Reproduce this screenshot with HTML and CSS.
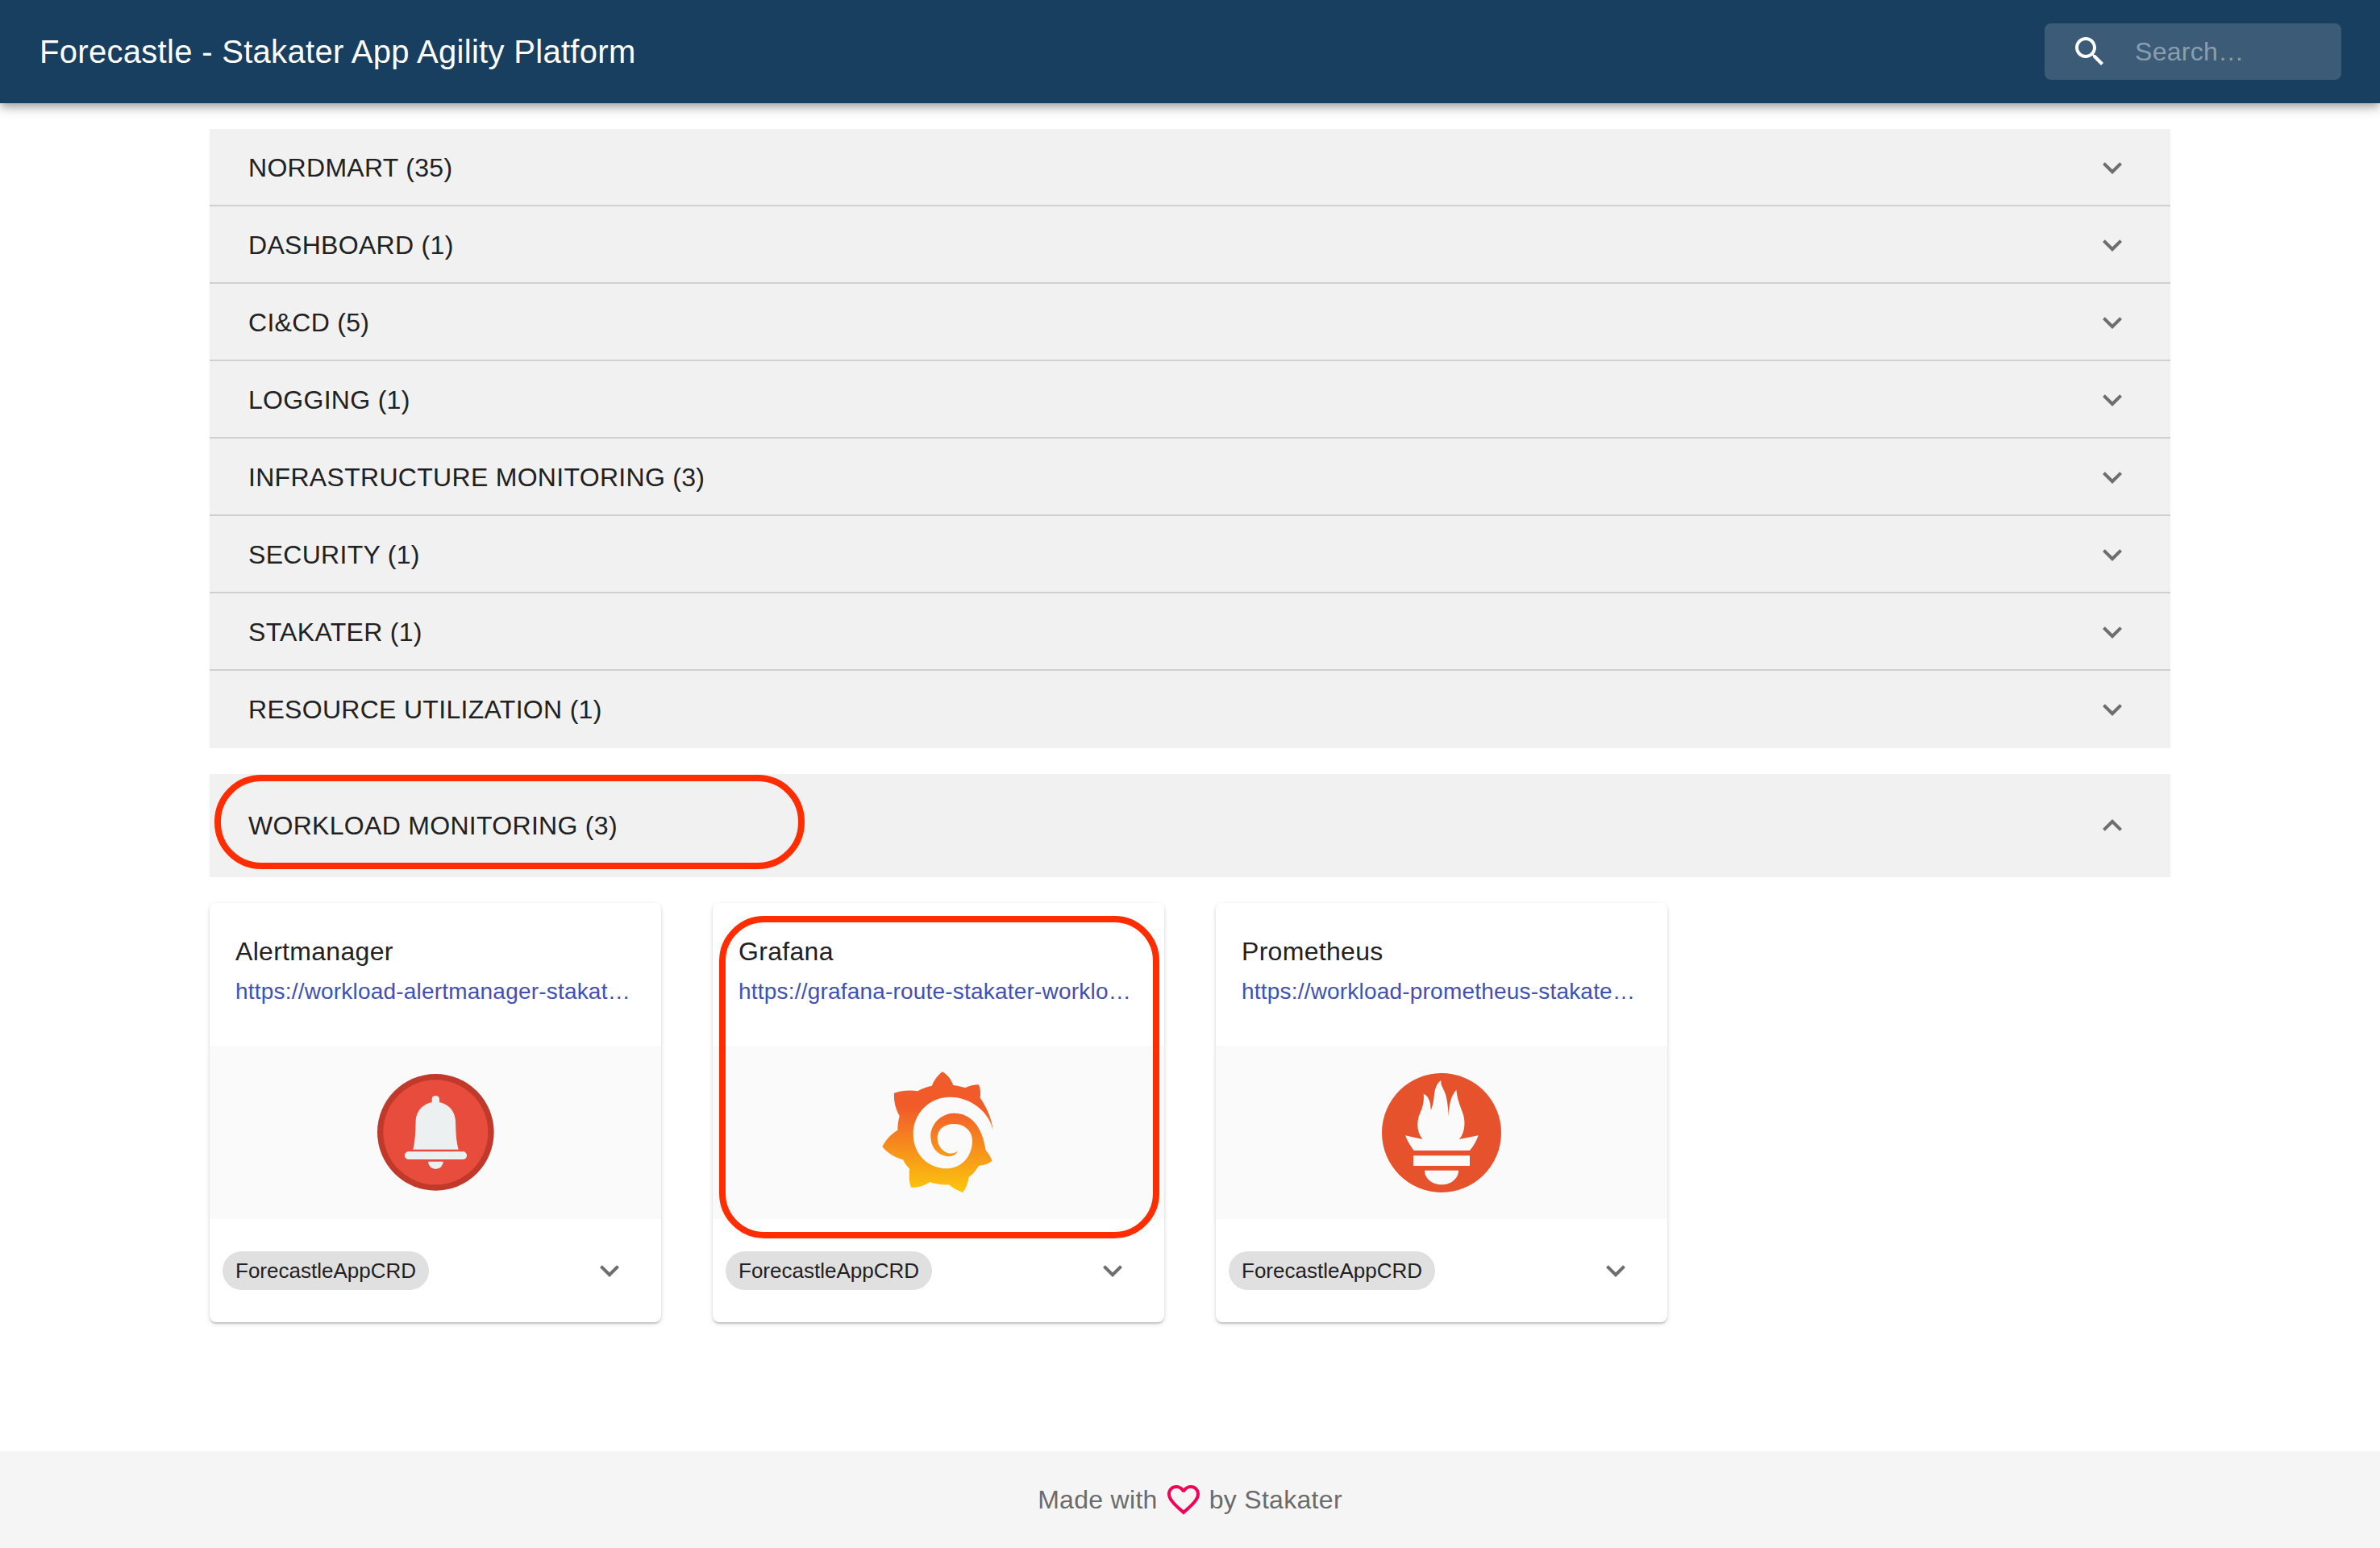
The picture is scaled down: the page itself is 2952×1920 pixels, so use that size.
FILE: index.html
```html
<!DOCTYPE html>
<html lang="en">
<head>
    <meta charset="UTF-8">
    <meta name="viewport" content="width=device-width, initial-scale=1.0">
    <title>Forecastle - Stakater App Agility Platform</title>
    <link rel="stylesheet" href="styles.css">
</head>
<body>
    <header class="appbar">
        <h1 class="appbar-title">Forecastle - Stakater App Agility Platform</h1>
        <div class="search">
            <svg class="icon search-icon" viewBox="0 0 24 24"><path d="M15.5 14h-.79l-.28-.27C15.41 12.59 16 11.11 16 9.5 16 5.91 13.09 3 9.5 3S3 5.91 3 9.5 5.91 16 9.5 16c1.61 0 3.09-.59 4.23-1.57l.27.28v.79l5 4.99L20.49 19l-4.99-5zm-6 0C7.01 14 5 11.99 5 9.5S7.01 5 9.5 5 14 7.01 14 9.5 11.99 14 9.5 14z"/></svg>
            <span class="search-text">Search…</span>
        </div>
    </header>

    <main class="content">
        <div class="group-list">
            <div class="group-row"><span>NORDMART (35)</span><svg class="icon chevron" viewBox="0 0 24 24"><path d="M16.59 8.59L12 13.17 7.41 8.59 6 10l6 6 6-6z"/></svg></div>
            <div class="group-row"><span>DASHBOARD (1)</span><svg class="icon chevron" viewBox="0 0 24 24"><path d="M16.59 8.59L12 13.17 7.41 8.59 6 10l6 6 6-6z"/></svg></div>
            <div class="group-row"><span>CI&amp;CD (5)</span><svg class="icon chevron" viewBox="0 0 24 24"><path d="M16.59 8.59L12 13.17 7.41 8.59 6 10l6 6 6-6z"/></svg></div>
            <div class="group-row"><span>LOGGING (1)</span><svg class="icon chevron" viewBox="0 0 24 24"><path d="M16.59 8.59L12 13.17 7.41 8.59 6 10l6 6 6-6z"/></svg></div>
            <div class="group-row"><span>INFRASTRUCTURE MONITORING (3)</span><svg class="icon chevron" viewBox="0 0 24 24"><path d="M16.59 8.59L12 13.17 7.41 8.59 6 10l6 6 6-6z"/></svg></div>
            <div class="group-row"><span>SECURITY (1)</span><svg class="icon chevron" viewBox="0 0 24 24"><path d="M16.59 8.59L12 13.17 7.41 8.59 6 10l6 6 6-6z"/></svg></div>
            <div class="group-row"><span>STAKATER (1)</span><svg class="icon chevron" viewBox="0 0 24 24"><path d="M16.59 8.59L12 13.17 7.41 8.59 6 10l6 6 6-6z"/></svg></div>
            <div class="group-row"><span>RESOURCE UTILIZATION (1)</span><svg class="icon chevron" viewBox="0 0 24 24"><path d="M16.59 8.59L12 13.17 7.41 8.59 6 10l6 6 6-6z"/></svg></div>
        </div>

        <div class="group-row group-open">
            <span>WORKLOAD MONITORING (3)</span>
            <svg class="icon chevron" viewBox="0 0 24 24"><path d="M12 8l-6 6 1.41 1.41L12 10.83l4.59 4.58L18 14z"/></svg>
            <div class="mark mark-group"></div>
        </div>

        <div class="cards">
            <div class="card">
                <div class="card-head">
                    <div class="card-title">Alertmanager</div>
                    <a class="card-link" href="#">https://workload-alertmanager-stakat…</a>
                </div>
                <div class="card-media">
                    <svg class="logo" width="200" height="180" viewBox="0 15 600 540">
                        <circle cx="301" cy="283" r="217" fill="#c0392b"/>
                        <circle cx="301" cy="283" r="195" fill="#e74c3c"/>
                        <rect x="287" y="147" width="28" height="40" rx="14" fill="#ecf0f1"/>
                        <path d="M217 347C226 310 226 270 227 240C230 195 265 170 301 170C337 170 372 195 375 240C376 270 376 310 386 347Z" fill="#ecf0f1"/>
                        <rect x="186" y="355" width="231" height="29" rx="14" fill="#ecf0f1"/>
                        <path d="M273 392H329A28 28 0 0 1 273 392Z" fill="#ecf0f1"/>
                    </svg>
                </div>
                <div class="card-actions">
                    <span class="chip">ForecastleAppCRD</span>
                    <span class="icon-btn"><svg class="icon chevron" viewBox="0 0 24 24"><path d="M16.59 8.59L12 13.17 7.41 8.59 6 10l6 6 6-6z"/></svg></span>
                </div>
            </div>

            <div class="card">
                <div class="card-head">
                    <div class="card-title">Grafana</div>
                    <a class="card-link" href="#">https://grafana-route-stakater-worklo…</a>
                </div>
                <div class="card-media">
                    <svg class="logo" width="200" height="180" viewBox="-18 15 600 540">
                        <defs>
                            <linearGradient id="grafanaFill" gradientUnits="userSpaceOnUse" x1="0" y1="190" x2="0" y2="507">
                                <stop offset="0" stop-color="#f15b2a"/>
                                <stop offset="1" stop-color="#fcc70c"/>
                            </linearGradient>
                        </defs>
                        <path fill="url(#grafanaFill)" d="M485 275C470 205 400 152 325 152C245 152 188 215 188 290C188 365 245 418 312 418C370 418 408 370 408 315C408 275 375 250 335 252C300 254 278 275 278 305C278 335 300 358 325 362C335 362 345 360 352 354C352 362 338 373 318 373C280 370 253 340 253 298C253 250 295 212 340 212C400 212 445 258 458 350C468 362 477 375 482 390C465 402 450 405 432 408C422 425 410 440 395 450C392 472 385 492 372 507C352 500 335 490 320 478C298 480 272 476 250 468C230 482 205 490 180 488C172 468 172 442 175 420C165 410 156 398 150 385C120 378 92 360 73 337C85 312 105 290 130 275C130 257 133 238 137 222C122 196 115 165 117 137C147 127 178 125 205 130C222 120 240 113 258 110C265 90 280 70 297 58C315 68 330 88 337 108C352 110 367 113 381 118C397 110 415 106 432 106C438 122 440 140 437 155C462 190 480 232 485 275Z"/>
                    </svg>
                </div>
                <div class="card-actions">
                    <span class="chip">ForecastleAppCRD</span>
                    <span class="icon-btn"><svg class="icon chevron" viewBox="0 0 24 24"><path d="M16.59 8.59L12 13.17 7.41 8.59 6 10l6 6 6-6z"/></svg></span>
                </div>
                <div class="mark mark-card"></div>
            </div>

            <div class="card">
                <div class="card-head">
                    <div class="card-title">Prometheus</div>
                    <a class="card-link" href="#">https://workload-prometheus-stakate…</a>
                </div>
                <div class="card-media">
                    <svg class="logo" width="240" height="216" viewBox="-35 -9 720 648">
                        <circle cx="325" cy="315" r="222" fill="#e6522c"/>
                        <path fill="#fafafa" d="M323 120C300 135 298 170 296 190C294 205 290 220 285 232C285 205 280 180 258 170C262 205 250 230 240 255C232 285 235 315 254 339L190 325C197 345 210 365 222 381H430C444 365 455 345 462 325L391 339C405 322 412 300 410 270C408 235 385 210 380 155C362 175 352 205 352 255C348 210 345 180 335 160C326 140 322 135 323 120Z"/>
                        <rect x="220" y="400" width="210" height="38" fill="#fafafa"/>
                        <path fill="#fafafa" d="M262 455H388C388 485 360 508 325 508C290 508 262 485 262 455Z"/>
                    </svg>
                </div>
                <div class="card-actions">
                    <span class="chip">ForecastleAppCRD</span>
                    <span class="icon-btn"><svg class="icon chevron" viewBox="0 0 24 24"><path d="M16.59 8.59L12 13.17 7.41 8.59 6 10l6 6 6-6z"/></svg></span>
                </div>
            </div>
        </div>
    </main>

    <footer class="footer">
        <span>Made with</span>
        <svg class="icon heart" viewBox="0 0 24 24"><path d="M16.5 3c-1.74 0-3.41.81-4.5 2.09C10.91 3.81 9.24 3 7.5 3 4.42 3 2 5.42 2 8.5c0 3.78 3.4 6.86 8.55 11.54L12 21.35l1.45-1.32C18.6 15.36 22 12.28 22 8.5 22 5.42 19.58 3 16.5 3zm-4.4 15.55l-.1.1-.1-.1C7.14 14.24 4 11.39 4 8.5 4 6.5 5.5 5 7.5 5c1.54 0 3.04.99 3.57 2.36h1.87C13.46 5.99 14.96 5 16.5 5c2 0 3.5 1.5 3.5 3.5 0 2.89-3.14 5.74-7.9 10.05z"/></svg>
        <span>by Stakater</span>
    </footer>
</body>
</html>
```
FILE: styles.css
```css
* {
    box-sizing: border-box;
}
body {
    font-family: "Liberation Sans", Arial, sans-serif;
    display: flex;
    flex-direction: column;
    min-height: 100vh;
    margin: 0;
    background-color: #fff;
    color: #212121;
    letter-spacing: 0.3px;
}
.icon {
    display: block;
    width: 48px;
    height: 48px;
    flex-shrink: 0;
}

/* top bar */
.appbar {
    position: relative;
    z-index: 10;
    display: flex;
    justify-content: space-between;
    align-items: center;
    height: 128px;
    padding: 0 48px 0 49px;
    background-color: #193f60;
    box-shadow: 0 4px 8px -2px rgba(0, 0, 0, 0.2), 0 8px 10px 0 rgba(0, 0, 0, 0.14), 0 2px 20px 0 rgba(0, 0, 0, 0.12);
}
.appbar-title {
    margin: 0;
    font-size: 40px;
    font-weight: 400;
    color: #fff;
}
.search {
    display: flex;
    align-items: center;
    width: 368px;
    height: 70px;
    padding-left: 32px;
    border-radius: 8px;
    background-color: rgba(255, 255, 255, 0.15);
}
.search-icon {
    fill: #fff;
}
.search-text {
    margin-left: 32px;
    font-size: 32px;
    color: rgba(255, 255, 255, 0.42);
}

/* groups */
.content {
    flex: 1;
    padding: 32px 260px 0;
}
.group-list {
    margin-bottom: 32px;
}
.group-row {
    position: relative;
    display: flex;
    justify-content: space-between;
    align-items: center;
    height: 96px;
    padding: 2px 48px 0;
    font-size: 32px;
    background-color: #f1f1f1;
    border-bottom: 2px solid #d0d0d0;
}
.group-row:last-child {
    padding-top: 0;
    border-bottom: none;
}
.group-open {
    height: 128px;
    padding-top: 0;
    border-bottom: none;
}
.chevron {
    fill: #6e6e6e;
}

/* cards */
.cards {
    display: flex;
    gap: 64px;
    margin-top: 32px;
}
.card {
    position: relative;
    width: 560px;
    height: 520px;
    border-radius: 8px;
    background-color: #fff;
    box-shadow: 0 2px 2px -2px rgba(0, 0, 0, 0.2), 0 2px 2px 0 rgba(0, 0, 0, 0.14), 0 2px 6px 0 rgba(0, 0, 0, 0.12);
}
.card-head {
    height: 177px;
    padding: 37px 32px 0;
}
.card-title {
    font-size: 32px;
    line-height: 46px;
}
.card-link {
    display: block;
    margin-top: 7px;
    overflow: hidden;
    font-size: 28px;
    line-height: 40px;
    letter-spacing: 0.2px;
    color: #3f51b5;
    text-decoration: none;
    white-space: nowrap;
    text-overflow: ellipsis;
}
.card-media {
    display: flex;
    justify-content: center;
    align-items: center;
    height: 215px;
    background-color: #fafafa;
}
.logo {
    display: block;
}
.card-actions {
    display: flex;
    justify-content: space-between;
    align-items: center;
    height: 128px;
    padding: 0 16px;
}
.chip {
    display: flex;
    align-items: center;
    height: 48px;
    padding: 0 16px;
    border-radius: 24px;
    font-size: 26px;
    letter-spacing: 0;
    background-color: #e0e0e0;
}
.icon-btn {
    display: flex;
    justify-content: center;
    align-items: center;
    width: 96px;
    height: 96px;
}

/* red marks drawn over the screenshot */
.mark {
    position: absolute;
    border: 8px solid #ff2d00;
    pointer-events: none;
}
.mark-group {
    top: 1px;
    left: 6px;
    width: 732px;
    height: 117px;
    border-radius: 58px;
}
.mark-card {
    top: 16px;
    left: 8px;
    width: 546px;
    height: 400px;
    border-radius: 56px;
}

/* footer */
.footer {
    display: flex;
    justify-content: center;
    align-items: center;
    gap: 8px;
    height: 120px;
    font-size: 32px;
    color: #6b6b6b;
    background-color: #f5f5f5;
}
.heart {
    fill: #f50057;
}
```
